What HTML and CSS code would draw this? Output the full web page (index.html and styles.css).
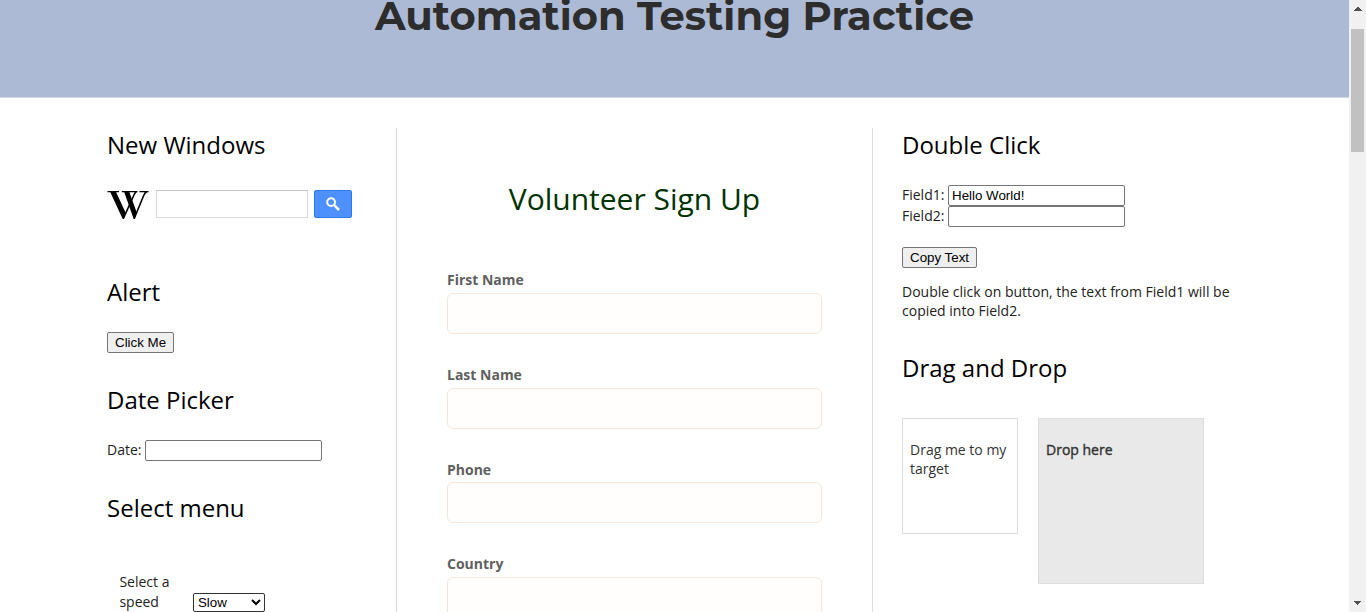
FILE: index.html
```html
<!DOCTYPE html>
<html lang="en">
<head>
<meta charset="utf-8">
<title>Automation Testing Practice</title>
<link rel="stylesheet" href="styles.css">
</head>
<body>
<div class="page">
  <header class="header"><h1 class="title">Automation Testing Practice</h1></header>
  <main class="columns">
    <aside class="left">
      <h2 class="heading new-windows">New Windows</h2>
      <div class="wiki">
        <svg class="wiki-logo" width="42" height="30" viewBox="0 0 42 30" aria-label="Wikipedia">
          <path d="M.5 1.6H12M14.8 1.6H30.5M32.5 1.6H41.5" stroke="#000" stroke-width="1.1"/>
          <path d="M3 1.6h5.8l9.6 20.6-1.5 6.8h-1.2zM17 1.6h5.2l7.4 20.6-1.7 6.8h-1.2z"/>
          <path d="M16.4 28.3 27.2 4.5q.8-1.8 2-2.9M27.3 28.3 36.7 5.5q1.3-3 3.3-3.9" fill="none" stroke="#000" stroke-width="1.6"/>
        </svg>
        <input class="wiki-input" type="text" aria-label="Search">
        <button class="wiki-button" aria-label="Search">
          <svg width="14" height="14" viewBox="0 0 14 14" fill="none" stroke="#fff"><circle cx="5.1" cy="5.1" r="3.9" stroke-width="2"/><path d="m8.2 8.2 4.8 4.8" stroke-width="2.6"/></svg>
        </button>
      </div>
      <h2 class="heading alert">Alert</h2>
      <button class="button">Click Me</button>
      <h2 class="heading date">Date Picker</h2>
      <label class="row"><span class="date-label">Date:</span><input class="field" type="text"></label>
      <h2 class="heading menu">Select menu</h2>
      <div class="speed">
        <label class="speed-label" for="speed">Select a speed</label>
        <select class="select" id="speed"><option>Slow</option></select>
      </div>
    </aside>
    <section class="middle">
      <h2 class="form-title">Volunteer Sign Up</h2>
      <form>
        <label class="group">First Name<input class="form-input" type="text"></label>
        <label class="group">Last Name<input class="form-input" type="text"></label>
        <label class="group">Phone<input class="form-input" type="text"></label>
        <label class="group">Country<input class="form-input" type="text"></label>
      </form>
    </section>
    <aside class="right">
      <h2 class="heading">Double Click</h2>
      <div class="fields">
        <label class="row"><span class="field-label">Field1:</span><input class="field" type="text" value="Hello World!"></label>
        <label class="row"><span class="field-label">Field2:</span><input class="field" type="text"></label>
      </div>
      <button class="button copy">Copy Text</button>
      <p class="note">Double click on button, the text from Field1 will be<br>copied into Field2.</p>
      <h2 class="heading drag">Drag and Drop</h2>
      <div class="boxes">
        <div class="draggable">Drag me to my<br>target</div>
        <div class="droppable">Drop here</div>
      </div>
    </aside>
  </main>
</div>
<div class="scrollbar">
  <svg width="17" height="17"><path d="M8 7h2v1h1v1h1v1h1v1H5v-1h1V9h1V8h1z" fill="#505050" shape-rendering="crispEdges"/></svg>
  <div class="thumb"></div>
  <svg class="down" width="17" height="17"><path d="M5 6h7v1h-1v1h-1v1H9v1H8V9H7V8H6V7H5z" fill="#505050" shape-rendering="crispEdges"/></svg>
</div>
</body>
</html>
```
FILE: styles.css
```css
* { box-sizing: border-box; }
body { margin: 0; display: flex; height: 612px; overflow: hidden; background: #fff; color: #222; font: 14px/20px "Open Sans", sans-serif; }
h1, h2, p { margin: 0; font-weight: 400; }
.page { width: 1349px; height: 612px; overflow: hidden; }
.header { height: 98px; background: #adbad5; border-bottom: 1px solid #d3d8dd; display: flex; justify-content: center; }
.title { margin-top: -9px; font: 700 40px/50px Montserrat, Inter, sans-serif; color: #2d2d2d; white-space: nowrap; }
.columns { display: flex; padding: 30px 0 0 107px; height: 514px; overflow: hidden; }
.left { width: 289px; flex: none; }
.middle { width: 477px; flex: none; border: solid #ddd; border-width: 0 1px; padding: 51px 50px 0; }
.right { width: 370px; flex: none; padding-left: 29px; }
.heading { font-size: 24px; line-height: 34px; color: #000; white-space: nowrap; }
.wiki { display: flex; align-items: flex-start; margin-top: 28px; height: 28px; }
.wiki-logo { flex: none; margin-right: 7px; }
.wiki-input { width: 152px; height: 28px; border: 1px solid #d9d9d9; border-top-color: #c0c0c0; margin: 0 6px 0 0; }
.wiki-button { width: 38px; height: 28px; padding: 0; display: flex; align-items: center; justify-content: center; background: #4d90fe; border: 1px solid #3079ed; border-radius: 2px; }
.alert { margin: 57px 0 23px; }
.date { margin: 30px 0 23px; }
.menu { margin-top: 30px; }
.button { display: block; height: 21px; padding: 0 7px; border: 1px solid #767676; border-radius: 2px; background: #efefef; color: #000; font: 13.333px/15px "Liberation Sans", Arial, sans-serif; }
.row { display: flex; height: 21px; line-height: 20px; }
.date-label { width: 38px; }
.field-label { width: 46px; }
.field { width: 177px; height: 21px; margin: 0; padding: 1px 3px; border: 1px solid #767676; border-radius: 2px; background: #fff; color: #000; font: 13.333px/15px "Liberation Sans", Arial, sans-serif; }
.speed { display: flex; padding: 47px 0 0 12.4px; align-items: flex-end; height: 87px; }
.speed-label { width: 73.6px; padding-right: 20px; }
.select { width: 72px; height: 19px; margin: 0; padding: 0; border: 1px solid #333; border-radius: 2px; background: #fff; color: #000; font: 13.333px "Liberation Sans", Arial, sans-serif; }
.form-title { font-size: 30px; line-height: 40px; text-align: center; color: #030; margin-bottom: 51.2px; white-space: nowrap; }
.group { display: block; height: 94.667px; font-weight: 700; color: #5f5f5f; }
.form-input { display: block; width: 375px; height: 41px; margin-top: 2.9px; border: 1px solid #f6e5d9; border-radius: 6px; background: #fffefc; }
.fields { margin-top: 23px; }
.copy { margin-top: 20px; }
.note { margin-top: 14px; line-height: 19px; white-space: nowrap; }
.drag { margin: 31px 0 33px; }
.boxes { display: flex; gap: 20px; line-height: 19px; color: #333; white-space: nowrap; }
.draggable { width: 116px; height: 116px; border: 1px solid #ddd; padding: 21px 7px; }
.droppable { width: 166px; height: 166px; border: 1px solid #ddd; background: #e9e9e9; padding: 21px 7px; -webkit-text-stroke: 0.4px #333; }
.scrollbar { width: 17px; height: 612px; background: #f1f1f1; display: flex; flex-direction: column; }
.scrollbar svg { display: block; flex: none; }
.thumb { width: 13px; height: 123px; margin: 12px 2px 0; background: #c1c1c1; flex: none; }
.down { margin-top: auto; }
```
